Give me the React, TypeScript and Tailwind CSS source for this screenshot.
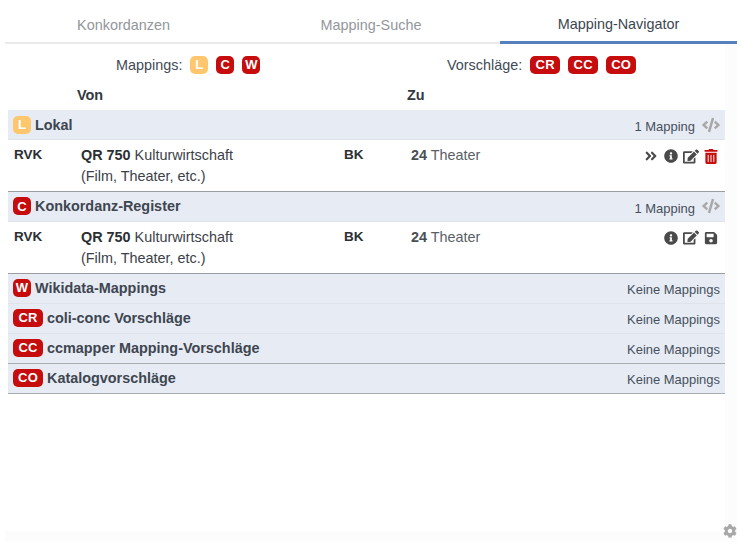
import { FaAngleDoubleRight, FaCode, FaCog, FaEdit, FaInfoCircle, FaSave, FaTrashAlt } from "react-icons/fa";

function Badge({ label, light }: { label: string; light?: boolean }) {
  return (
    <span
      className={`inline-flex h-[18px] shrink-0 items-center justify-center rounded-[5px] text-[13px] font-bold tracking-[0.2px] text-white ${
        label.length > 1 ? "w-[30px]" : "w-[18px]"
      } ${light ? "bg-[#ffc76d]" : "bg-[#c60c0c]"}`}
    >
      {label}
    </span>
  );
}

function GroupHeader({ badge, title, right, light, showCode, border, compact }: { badge: string; title: string; right: string; light?: boolean; showCode?: boolean; border: string; compact?: boolean }) {
  return (
    <div className={`flex items-center bg-[#e7ebf4] pl-[5px] pr-[5px] border-b ${compact ? "h-[29.6px]" : "h-[30px]"} ${border}`}>
      <Badge label={badge} light={light} />
      <span className="ml-1 pt-[2px] text-[14.4px] font-bold text-[#3e4650] [text-rendering:optimizeSpeed]">{title}</span>
      <span className={`ml-auto text-[12.96px] text-[#46505c] ${showCode ? "pt-[5px]" : "pt-[4px]"}`}>{right}</span>
      {showCode && <FaCode className="ml-[7px] h-[18px] w-[18px] text-[#a8a8a8]" />}
    </div>
  );
}

function MappingRow({ children }: { children: React.ReactNode }) {
  return (
    <div className="flex h-[52px] border-b border-[#9a9da1] text-[14.4px] leading-[21px]">
      <div className="w-[73px] pl-[6px] pt-[4px] text-[13.5px] font-bold text-[#2b2f33]">RVK</div>
      <div className="w-[263px] pt-[5px] text-[#3c4148]">
        <div>
          <b className="text-[#2b2f33]">QR 750</b> Kulturwirtschaft
        </div>
        <div>(Film, Theater, etc.)</div>
      </div>
      <div className="w-[67px] pt-[4px] text-[13.5px] font-bold text-[#2b2f33]">BK</div>
      <div className="pt-[5px] text-[#5a5f66]">
        <b className="text-[#4a4f55]">24</b> Theater
      </div>
      <div className="ml-auto flex h-[24px] items-center pr-[7px] pt-[8px] text-[#4a4a4a]">{children}</div>
    </div>
  );
}

export default function App() {
  return (
    <div className="relative h-[546px] w-[742px] overflow-hidden bg-white font-['Liberation_Sans',sans-serif]">
      <div className="ml-[5px] flex h-[44px] w-[732px] border-b-2 border-[#eaeaea] text-[14.4px]">
        <div className="flex w-[237px] items-center justify-center pt-[9px] text-[#92969b]">Konkordanzen</div>
        <div className="flex w-[258px] items-center justify-center pt-[9px] text-[#92969b]">Mapping-Suche</div>
        <div className="-mb-[2px] flex flex-1 items-center justify-center border-b-[3px] border-[#5580bd] pt-[9px] text-[#3c4650]">Mapping-Navigator</div>
      </div>

      <div className="ml-[5px] h-[498px] w-[732px] border-r-[12px] border-b-[11px] border-[#fcfcfc]">
        <div className="flex h-[42px] items-center text-[14.4px] text-[#3f4a56]">
          <div className="ml-[111px] flex w-[331px] items-center">
            <span className="mr-2 pt-[1px]">Mappings:</span>
            <span className="flex gap-[8px]">
              <Badge label="L" light />
              <Badge label="C" />
              <Badge label="W" />
            </span>
          </div>
          <div className="flex items-center">
            <span className="mr-2 pt-[1px]">Vorschläge:</span>
            <span className="flex gap-[8px]">
              <Badge label="CR" />
              <Badge label="CC" />
              <Badge label="CO" />
            </span>
          </div>
        </div>

        <div className="flex h-[24px] items-start text-[14.4px] leading-[19px] font-bold text-[#33383e]">
          <span className="ml-[72px] w-[330px]">Von</span>
          <span>Zu</span>
        </div>

        <div className="ml-[3px] w-[717px]">
          <GroupHeader badge="L" title="Lokal" right="1 Mapping" light showCode border="border-[#dfe2e8]" />
          <MappingRow>
            <FaAngleDoubleRight className="h-[14px] w-[14px]" />
            <FaInfoCircle className="ml-[6px] h-[14px] w-[14px]" />
            <FaEdit className="ml-[5px] h-[15px] w-[16px]" />
            <FaTrashAlt className="ml-[5px] h-[15px] w-[14px] text-[#c60c0c]" />
          </MappingRow>
          <GroupHeader badge="C" title="Konkordanz-Register" right="1 Mapping" showCode compact border="border-[#dfe2e8]" />
          <MappingRow>
            <FaInfoCircle className="h-[14px] w-[14px]" />
            <FaEdit className="ml-[5px] h-[15px] w-[16px]" />
            <FaSave className="ml-[5px] h-[14px] w-[14px]" />
          </MappingRow>
          <GroupHeader badge="W" title="Wikidata-Mappings" right="Keine Mappings" border="border-[#e0e3e9]" />
          <GroupHeader badge="CR" title="coli-conc Vorschläge" right="Keine Mappings" border="border-[#e0e3e9]" />
          <GroupHeader badge="CC" title="ccmapper Mapping-Vorschläge" right="Keine Mappings" border="border-[#a9acb0]" />
          <GroupHeader badge="CO" title="Katalogvorschläge" right="Keine Mappings" border="border-[#a9acb0]" />
        </div>
      </div>

      <FaCog className="absolute left-[723px] top-[524px] h-[14px] w-[14px] text-[#a8a8a8]" />
    </div>
  );
}
